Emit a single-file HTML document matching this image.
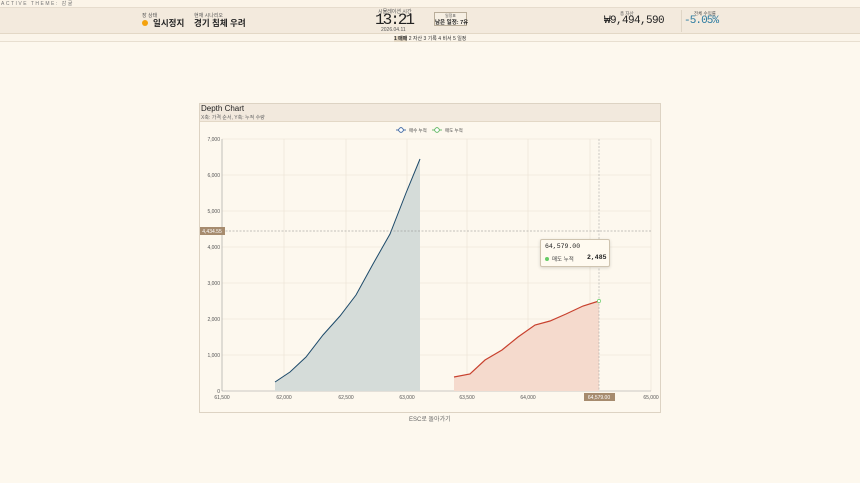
<!DOCTYPE html>
<html><head><meta charset="utf-8"><style>
*{margin:0;padding:0;box-sizing:border-box}
body{width:860px;height:483px;background:#fdf8ee;font-family:"Liberation Sans","Noto Sans CJK KR",sans-serif;position:relative;overflow:hidden;color:#222}
.a{position:absolute;white-space:nowrap}
</style></head><body>
<div class="a" style="left:0;top:0;width:860px;height:7px;background:#fbf4e8"></div>
<div class="a" style="left:1px;top:0;font-size:5px;letter-spacing:1.5px;color:#777">ACTIVE THEME: 감귤</div>
<div class="a" style="left:0;top:7px;width:860px;height:27px;background:#f3eadd;border-top:1px solid #e6dccd;border-bottom:1px solid #e3d8c6"></div>
<div class="a" style="left:0;top:34px;width:860px;height:8px;background:#fbf5ea;border-bottom:1px solid #e8dfd0"></div>
<div class="a" style="left:142px;top:12px;font-size:5px;color:#555">장 상태</div>
<div class="a" style="left:142px;top:20px;width:6px;height:6px;border-radius:50%;background:#f4a20c"></div>
<div class="a" style="left:153px;top:17px;font-size:8.5px;font-weight:bold">일시정지</div>
<div class="a" style="left:194px;top:12px;font-size:5px;color:#555">현재 시나리오</div>
<div class="a" style="left:194px;top:17px;font-size:8.5px;font-weight:bold">경기 침체 우려</div>
<div class="a" style="left:378px;top:8px;font-size:5px;color:#555">시뮬레이션 시간</div>
<div class="a" style="left:375px;top:11px;font-size:16px;font-family:'Liberation Mono',monospace;letter-spacing:-2px">13:21</div>
<div class="a" style="left:381px;top:27px;font-size:5px;color:#555">2026.04.11</div>
<div class="a" style="left:434px;top:12px;width:33px;height:14px;border:1px solid #b9ad99;background:#f6efe3"></div>
<div class="a" style="left:445px;top:13px;font-size:4px;color:#555">일정표</div>
<div class="a" style="left:435px;top:18px;font-size:5.5px;font-weight:bold">남은 일정: 7유</div>
<div class="a" style="left:394px;top:35px;font-size:5px;color:#333"><span style="background:#e2d6c2;font-weight:bold">1 매매</span> 2 자산 3 기록 4 비서 5 일정</div>
<div class="a" style="left:620px;top:11px;font-size:4.5px;color:#555">총 자산</div>
<div class="a" style="left:604px;top:15px;font-size:11px;font-family:'Liberation Mono',monospace;letter-spacing:-0.6px">₩9,494,590</div>
<div class="a" style="left:681px;top:10px;width:1px;height:22px;background:#e0d6c6"></div>
<div class="a" style="left:694px;top:11px;font-size:4.5px;color:#555">전체 수익률</div>
<div class="a" style="left:684px;top:15px;font-size:11px;font-family:'Liberation Mono',monospace;letter-spacing:-0.9px;color:#2a7aa0">-5.05%</div>

<div class="a" style="left:199px;top:103px;width:462px;height:310px;border:1px solid #ddd3c3;background:#fdf8ee"></div>
<div class="a" style="left:200px;top:104px;width:460px;height:18px;background:#f2e9dd;border-bottom:1px solid #e3d8c6"></div>
<div class="a" style="left:201px;top:104px;font-size:8px">Depth Chart</div>
<div class="a" style="left:201px;top:114px;font-size:5px;color:#666">X축: 가격 순서, Y축: 누적 수량</div>
<svg class="a" style="left:0;top:0" width="860" height="483">
<g stroke-width="0.8" fill="#fff">
<line x1="396" y1="130" x2="406" y2="130" stroke="#24549a"/><circle cx="401" cy="130" r="2.3" stroke="#24549a"/>
<line x1="432" y1="130" x2="442" y2="130" stroke="#4caf50"/><circle cx="437" cy="130" r="2.3" stroke="#4caf50"/>
</g>
<g font-size="4.5" fill="#444" font-family="Liberation Sans,Noto Sans CJK KR"><text x="409" y="132">매수 누적</text><text x="445" y="132">매도 누적</text></g>
<g stroke="#e9e1d2" stroke-width="0.6">
<line x1="222" y1="139" x2="651" y2="139"/><line x1="222" y1="175" x2="651" y2="175"/><line x1="222" y1="211" x2="651" y2="211"/><line x1="222" y1="247" x2="651" y2="247"/><line x1="222" y1="283" x2="651" y2="283"/><line x1="222" y1="319" x2="651" y2="319"/><line x1="222" y1="355" x2="651" y2="355"/>
<line x1="284" y1="139" x2="284" y2="391"/><line x1="346" y1="139" x2="346" y2="391"/><line x1="407" y1="139" x2="407" y2="391"/><line x1="467" y1="139" x2="467" y2="391"/><line x1="528" y1="139" x2="528" y2="391"/><line x1="590" y1="139" x2="590" y2="391"/><line x1="651" y1="139" x2="651" y2="391"/>
</g>
<line x1="222" y1="139" x2="222" y2="391" stroke="#999" stroke-width="0.6"/>
<line x1="222" y1="391" x2="651" y2="391" stroke="#999" stroke-width="0.6"/>
<path d="M275 391L275 382L290 372L306 357L323 335L340 316L356 295L373 264L390 234L406 193L420 159L420 391Z" fill="#d5dcd9"/>
<path d="M275 382L290 372L306 357L323 335L340 316L356 295L373 264L390 234L406 193L420 159" fill="none" stroke="#1d4a6a" stroke-width="1"/>
<path d="M454 391L454 377L470 374L485 360L502 350L518 337L535 325L550 321L566 314L583 306L599 301L599 391Z" fill="#f5dacd"/>
<path d="M454 377L470 374L485 360L502 350L518 337L535 325L550 321L566 314L583 306L599 301" fill="none" stroke="#c8412e" stroke-width="1.2"/>
<line x1="222" y1="231" x2="651" y2="231" stroke="#888" stroke-width="0.5" stroke-dasharray="2,1.5"/>
<line x1="599" y1="139" x2="599" y2="391" stroke="#999" stroke-width="0.5" stroke-dasharray="2,1.5"/>
<circle cx="599" cy="301" r="1.6" fill="#fff" stroke="#6c6" stroke-width="0.7"/>
<g font-size="5" fill="#555" text-anchor="end" font-family="Liberation Sans">
<text x="220" y="141">7,000</text><text x="220" y="177">6,000</text><text x="220" y="213">5,000</text><text x="220" y="249">4,000</text><text x="220" y="285">3,000</text><text x="220" y="321">2,000</text><text x="220" y="357">1,000</text><text x="220" y="393">0</text>
</g>
<g font-size="5" fill="#555" text-anchor="middle" font-family="Liberation Sans">
<text x="222" y="399">61,500</text><text x="284" y="399">62,000</text><text x="346" y="399">62,500</text><text x="407" y="399">63,000</text><text x="467" y="399">63,500</text><text x="528" y="399">64,000</text><text x="651" y="399">65,000</text>
</g>
<rect x="200" y="227" width="25" height="8" fill="#a68b6e"/>
<text x="212" y="233" font-size="5" fill="#fff" text-anchor="middle" font-family="Liberation Sans">4,434.55</text>
<rect x="584" y="393" width="31" height="8" fill="#a68b6e"/>
<text x="599" y="399" font-size="5" fill="#fff" text-anchor="middle" font-family="Liberation Sans">64,579.00</text>
</svg>
<div class="a" style="left:540px;top:239px;width:70px;height:28px;background:#fffaf0;border:1px solid #cfc4b0;border-radius:2px;box-shadow:0 1px 3px rgba(0,0,0,.15)"></div>
<div class="a" style="left:545px;top:243px;font-size:6.5px;font-family:'Liberation Mono',monospace">64,579.00</div>
<div class="a" style="left:545px;top:257px;width:4px;height:4px;border-radius:50%;background:#6c6"></div>
<div class="a" style="left:552px;top:255px;font-size:5.5px;color:#444">매도 누적</div>
<div class="a" style="left:587px;top:254px;font-size:6.5px;font-weight:bold;font-family:'Liberation Mono',monospace">2,485</div>
<div class="a" style="left:409px;top:414px;font-size:6px;color:#666">ESC로 돌아가기</div>
</body></html>
